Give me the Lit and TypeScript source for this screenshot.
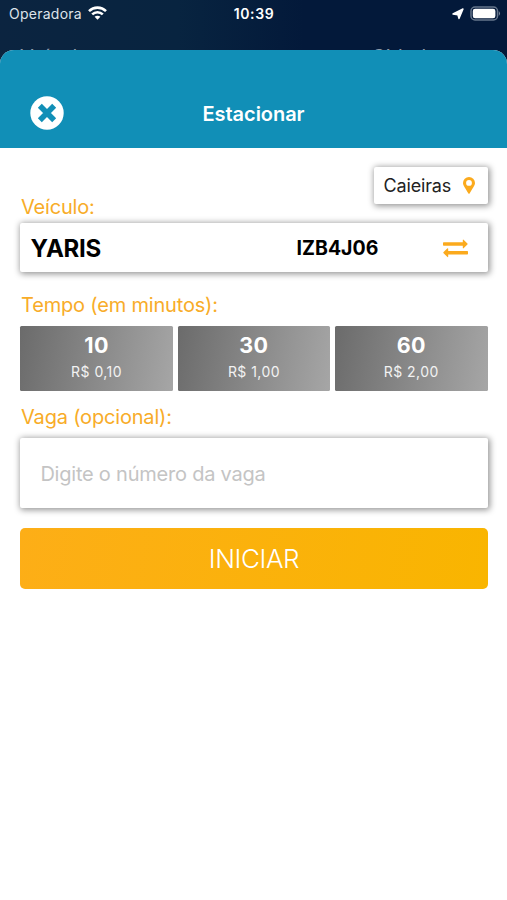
import { LitElement, html, css } from "lit";
import { customElement, state } from "lit/decorators.js";

interface Plan {
  minutes: string;
  price: string;
}

@customElement("status-bar")
class StatusBar extends LitElement {
  static styles = css`
    :host {
      display: grid;
      grid-template-columns: 1fr auto 1fr;
      align-items: center;
      height: 28px;
      padding: 0 6px 0 9px;
      color: #fff;
      font-size: 14px;
      line-height: 28px;
    }
    .carrier {
      display: flex;
      align-items: center;
      gap: 6px;
      color: #dde3ea;
      letter-spacing: 0.25px;
    }
    .time {
      margin-right: 2px;
      font-weight: 600;
      letter-spacing: 0.65px;
    }
    .right {
      display: flex;
      justify-content: flex-end;
      align-items: center;
      gap: 6px;
    }
    svg {
      display: block;
    }
    .wifi {
      margin-top: -2px;
    }
    .battery {
      margin-top: -1px;
    }
  `;
  render() {
    return html`
      <div class="carrier">
        <span>Operadora</span>
        <svg class="wifi" width="19" height="14" viewBox="0 0 19 14">
          <g fill="none" stroke="#fff" stroke-width="2.6">
            <path d="M1 5.1C5.7 0.5 13.3 0.5 18 5.1" />
            <path d="M4.2 8.4C7.2 5.5 11.8 5.5 14.8 8.4" />
          </g>
          <path d="M9.5 13.8L6.6 10.8C8.2 9.3 10.8 9.3 12.4 10.8Z" fill="#fff" />
        </svg>
      </div>
      <div class="time">10:39</div>
      <div class="right">
        <svg width="12" height="12" viewBox="0 0 12 12">
          <path d="M11 1L7 10.6L5.9 6.7L1 6Z" fill="#fff" stroke="#fff" stroke-width="1.4" stroke-linejoin="round" />
        </svg>
        <svg class="battery" width="31" height="15" viewBox="0 0 31 15">
          <rect x="1" y="1" width="26.5" height="13" rx="4" fill="none" stroke="#66768c" stroke-width="1.5" />
          <rect x="2.8" y="2.8" width="22.6" height="9.4" rx="2.3" fill="#fff" />
          <path d="M28.8 5Q31.2 7.5 28.8 10Z" fill="#7c8a9c" />
        </svg>
      </div>
    `;
  }
}

@customElement("app-root")
class AppRoot extends LitElement {
  @state() private plans: Plan[] = [
    { minutes: "10", price: "R$ 0,10" },
    { minutes: "30", price: "R$ 1,00" },
    { minutes: "60", price: "R$ 2,00" },
  ];

  static styles = css`
    :host {
      display: flex;
      flex-direction: column;
      height: 900px;
      overflow: hidden;
      font-family: Inter, "Liberation Sans", sans-serif;
      background: linear-gradient(90deg, #0b2440, #082440 35%, #03193a 60%, #03193a);
    }
    * {
      box-sizing: border-box;
    }
    .behind {
      display: flex;
      height: 44px;
      margin-bottom: -22px;
      padding: 16px 69px 0 20px;
      justify-content: space-between;
      color: #8d9bab;
      font-size: 20px;
      line-height: 26px;
    }
    .sheet {
      position: relative;
      flex: 1;
      display: flex;
      flex-direction: column;
      background: #fff;
      border-radius: 14px 14px 0 0;
      overflow: hidden;
    }
    .header {
      display: grid;
      grid-template-columns: 1fr auto 1fr;
      align-items: center;
      height: 97.5px;
      padding: 29px 30px 0;
      background: #118fb7;
      color: #fff;
    }
    .close {
      width: 34px;
      height: 34px;
      padding: 0;
      border: 0;
      background: none;
    }
    .close svg,
    .icon {
      display: block;
    }
    .title {
      padding-top: 1px;
      font-size: 20px;
      font-weight: 600;
      letter-spacing: -0.05px;
    }
    .content {
      display: flex;
      flex-direction: column;
      padding: 19px 19.5px 0 20.4px;
    }
    .card {
      background: #fff;
      border-radius: 2px;
      box-shadow: 1px 1px 6px 1px rgba(0, 0, 0, 0.42);
    }
    .city {
      align-self: flex-end;
      display: flex;
      align-items: center;
      gap: 12px;
      width: 114px;
      height: 37px;
      padding-left: 10px;
      color: #222;
      font-size: 18px;
      letter-spacing: -0.15px;
    }
    .label {
      padding-left: 0.6px;
      color: #f8ac28;
      font-size: 20px;
      line-height: 24px;
      letter-spacing: -0.18px;
    }
    .l1 {
      margin-top: -9px;
    }
    .vehicle {
      display: grid;
      grid-template-columns: 266px 1fr auto;
      align-items: center;
      height: 49px;
      margin-top: 4.5px;
      padding: 1px 20px 0 10.2px;
      color: #000;
      font-weight: 700;
    }
    .model {
      font-size: 24px;
      letter-spacing: -0.3px;
    }
    .plate {
      font-size: 19.5px;
    }
    .l2 {
      margin-top: 21px;
    }
    .plans {
      display: grid;
      grid-template-columns: repeat(3, 1fr);
      gap: 5px;
      margin-top: 8.5px;
    }
    .plan {
      display: flex;
      flex-direction: column;
      align-items: center;
      height: 65px;
      padding-top: 5px;
      border-radius: 1.5px;
      background: linear-gradient(100deg, #6b6b6b, #a6a6a6);
      color: #fff;
    }
    .minutes {
      font-size: 21.5px;
      font-weight: 700;
      line-height: 28px;
      letter-spacing: 0.4px;
    }
    .price {
      padding-top: 1px;
      font-size: 14px;
      line-height: 24px;
      letter-spacing: 0.45px;
      color: #f2f2f2;
    }
    .l3 {
      margin-top: 14px;
    }
    .spot {
      height: 70px;
      width: 100%;
      margin-top: 9.5px;
      padding: 2px 20px 0;
      border: 0;
      font: 20px Inter, "Liberation Sans", sans-serif;
      letter-spacing: -0.22px;
    }
    .spot::placeholder {
      color: #c4c4c4;
      opacity: 1;
    }
    .start {
      height: 61px;
      margin-top: 19.5px;
      padding: 1px 0 0;
      border: 0;
      border-radius: 5px;
      background: linear-gradient(100deg, #fdae17, #f9b500);
      color: #fff;
      font: 350 26px Inter, "Liberation Sans", sans-serif;
      letter-spacing: -0.4px;
    }
  `;

  render() {
    return html`
      <status-bar></status-bar>
      <div class="behind"><span>Veículo</span><span>Cidade</span></div>
      <main class="sheet">
        <header class="header">
          <button class="close" aria-label="Fechar">
            <svg width="34" height="34" viewBox="0 0 34 34">
              <circle cx="17" cy="17" r="16.7" fill="#fff" />
              <path
                d="M11.8 11.8L22.2 22.2M22.2 11.8L11.8 22.2"
                stroke="#118fb7"
                stroke-width="5.6"
                stroke-linecap="square"
              />
            </svg>
          </button>
          <div class="title">Estacionar</div>
        </header>
        <section class="content">
          <div class="card city">
            <span>Caieiras</span>
            <svg class="icon" width="12" height="17" viewBox="0 0 12 17">
              <path
                fill="#fbaa1d"
                fill-rule="evenodd"
                d="M6 0A6 6 0 0 1 12 6C12 8.5 9.5 11.5 6.6 16.4Q6 17.2 5.4 16.4C2.5 11.5 0 8.5 0 6A6 6 0 0 1 6 0ZM6 3A2.9 2.9 0 1 0 6 8.8A2.9 2.9 0 1 0 6 3Z"
              />
            </svg>
          </div>
          <div class="label l1">Veículo:</div>
          <div class="card vehicle">
            <span class="model">YARIS</span>
            <span class="plate">IZB4J06</span>
            <svg class="icon" width="25" height="19" viewBox="0 0 25 19">
              <path
                fill="#fbaa1d"
                d="M0.7 3.3H19.8V1.3Q19.8 0 20.8 0.9L24.4 4.4Q25 5 24.4 5.6L20.8 9.1Q19.8 10 19.8 8.7V6.7H0.7Q0 6.7 0 6V4Q0 3.3 0.7 3.3ZM24.3 12H5.2V10Q5.2 8.7 4.2 9.6L0.6 13.1Q0 13.7 0.6 14.3L4.2 17.8Q5.2 18.7 5.2 17.4V15.4H24.3Q25 15.4 25 14.7V12.7Q25 12 24.3 12Z"
              />
            </svg>
          </div>
          <div class="label l2">Tempo (em minutos):</div>
          <div class="plans">
            ${this.plans.map(
              (p) => html`<div class="plan">
                <span class="minutes">${p.minutes}</span>
                <span class="price">${p.price}</span>
              </div>`
            )}
          </div>
          <div class="label l3">Vaga (opcional):</div>
          <input class="card spot" placeholder="Digite o número da vaga" />
          <button class="start">INICIAR</button>
        </section>
      </main>
    `;
  }
}
